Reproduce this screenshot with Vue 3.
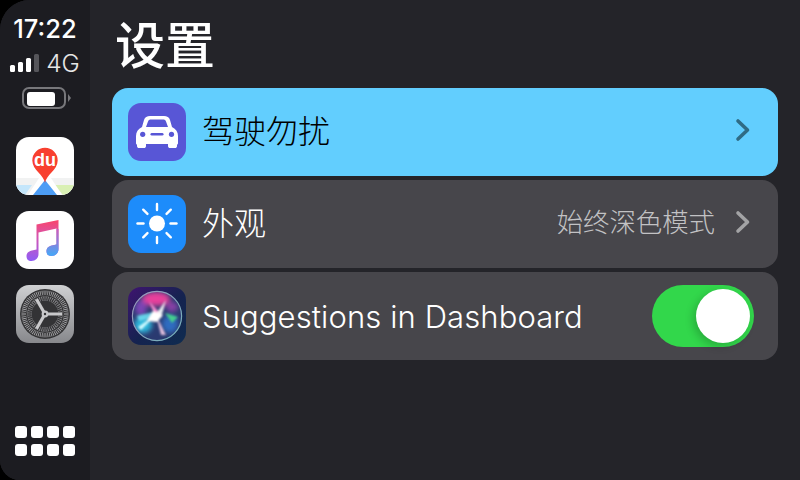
<script setup>
const rows = [
  { id: 'dnd', label: '驾驶勿扰', chevron: true, active: true },
  { id: 'look', label: '外观', value: '始终深色模式', chevron: true },
  { id: 'siri', label: 'Suggestions in Dashboard', latin: true, toggle: true },
]
const outerTicks = Array.from({ length: 72 }, (_, i) => i * 5)
const innerTicks = Array.from({ length: 48 }, (_, i) => i * 7.5)
const gridDots = Array.from({ length: 8 }, (_, i) => i)
const sunRays = [0, 45, 90, 135, 180, 225, 270, 315]
</script>

<template>
  <div class="screen">
    <aside class="sidebar">
      <div class="time">17:22</div>
      <div class="signal">
        <span class="bars">
          <i class="b1"></i><i class="b2"></i><i class="b3"></i><i class="b4"></i>
        </span>
        <span class="net">4G</span>
      </div>
      <div class="battery">
        <span class="cell"><span class="charge"></span></span>
        <span class="tip"></span>
      </div>

      <div class="apps">
        <svg class="app" viewBox="0 0 58 58">
          <defs>
            <clipPath id="appClip"><rect width="58" height="58" rx="13" /></clipPath>
          </defs>
          <g clip-path="url(#appClip)">
            <rect width="58" height="58" fill="#fff" />
            <rect y="41" width="58" height="17" fill="#f1f2f2" />
            <path d="M0 48 L16 48 L9 58 L0 58Z" fill="#c4e6fb" />
            <path d="M58 48 L39 48 L47 58 L58 58Z" fill="#d9f0b4" />
            <path d="M23 41 L35 41 L46 58 L12 58Z" fill="#fff" />
            <path d="M29 43 L17 58 L41 58Z" fill="#4d9df5" />
            <path d="M29 46 C28 38 16.3 33 16.3 23.5 A12.7 12.7 0 0 1 41.7 23.5 C41.7 33 30 38 29 46Z" fill="#f8402f" />
            <text x="29" y="29" class="du">du</text>
          </g>
        </svg>

        <svg class="app" viewBox="0 0 58 58">
          <defs>
            <linearGradient id="noteGrad" x1="0" y1="0" x2="0" y2="1">
              <stop offset="0" stop-color="#f9446a" />
              <stop offset="0.4" stop-color="#d655b0" />
              <stop offset="1" stop-color="#8f5cf5" />
            </linearGradient>
            <linearGradient id="noteBlue" x1="0" y1="0" x2="0" y2="1">
              <stop offset="0" stop-color="#c85cc0" />
              <stop offset="1" stop-color="#42aaf8" />
            </linearGradient>
          </defs>
          <rect width="58" height="58" rx="13" fill="#fff" />
          <path d="M20.5 13.5 L42.5 9 V38 C42.5 42 39.5 45 35.5 45 C32 45 30.5 43 30.5 40 C30.5 37 33 35 36 34.5 L40.5 33.5 V17.5 L22.5 21.5 V43 C22.5 47 19.5 50 15.5 50 C12 50 10.5 48 10.5 45 C10.5 42 13 40 16 39.5 L20.5 38.5Z" fill="url(#noteGrad)" />
          <path d="M40.5 18 H42.5 V38 C42.5 42 39.5 45 35.5 45 C32 45 30.5 43 30.5 40 C30.5 37 33 35 36 34.5 L40.5 33.5Z" fill="url(#noteBlue)" />
        </svg>

        <svg class="app" viewBox="0 0 58 58">
          <defs>
            <linearGradient id="gearBg" x1="0" y1="0" x2="0" y2="1">
              <stop offset="0" stop-color="#cfd0d2" />
              <stop offset="1" stop-color="#87888c" />
            </linearGradient>
          </defs>
          <rect width="58" height="58" rx="13" fill="url(#gearBg)" />
          <circle cx="29" cy="29" r="25" fill="#333335" />
          <circle cx="29" cy="29" r="23.6" fill="#b0b0b3" />
          <g stroke="#333335" stroke-width="1.1">
            <line v-for="t in outerTicks" :key="t" x1="29" y1="5" x2="29" y2="10" :transform="`rotate(${t} 29 29)`" />
          </g>
          <circle cx="29" cy="29" r="19" fill="#333335" />
          <circle cx="29" cy="29" r="17.6" fill="#a4a4a7" />
          <g stroke="#333335" stroke-width="1.4">
            <line v-for="t in innerTicks" :key="t" x1="29" y1="11.6" x2="29" y2="15.6" :transform="`rotate(${t} 29 29)`" />
          </g>
          <circle cx="29" cy="29" r="13.4" fill="#333335" />
          <g stroke="#c8c8ca" stroke-width="3.2">
            <line x1="29" y1="29" x2="46" y2="29" />
            <line x1="29" y1="29" x2="20.5" y2="14.3" />
            <line x1="29" y1="29" x2="20.5" y2="43.7" />
          </g>
          <circle cx="29" cy="29" r="3.4" fill="#c8c8ca" />
          <circle cx="29" cy="29" r="1.2" fill="#333335" />
        </svg>
      </div>

      <div class="grid-btn">
        <i v-for="d in gridDots" :key="d"></i>
      </div>
    </aside>

    <main class="main">
      <h1 class="title">设置</h1>
      <ul class="list">
        <li v-for="row in rows" :key="row.id" class="row" :class="{ active: row.active }">
          <svg v-if="row.id === 'dnd'" class="icon" viewBox="0 0 58 58">
            <rect width="58" height="58" rx="13" fill="#5856d6" />
            <path fill-rule="evenodd" fill="#fff" d="M14 24 L16 17 C17 14 19 13 22 13 H36 C39 13 41 14 42 17 L44 24 C48 26 50 29 50 33 V40 C50 41 49.5 41.5 49 41.5 V43 C49 44.5 48 45 47 45 H42 C41 45 40 44.5 40 43 V41 H18 V43 C18 44.5 17 45 16 45 H11 C10 45 9 44.5 9 43 V41.5 C8.5 41.5 8 41 8 40 V33 C8 29 10 26 14 24Z M18 24 H40 L38 18.5 C37.5 17 36.5 16.5 35 16.5 H23 C21.5 16.5 20.5 17 20 18.5Z" />
            <circle cx="14.7" cy="31.3" r="2.6" fill="#5856d6" />
            <circle cx="43.5" cy="31.3" r="2.6" fill="#5856d6" />
            <rect x="22.5" y="30" width="13" height="2.6" rx="1.3" fill="#5856d6" />
          </svg>

          <svg v-else-if="row.id === 'look'" class="icon" viewBox="0 0 58 58">
            <rect width="58" height="58" rx="13" fill="#1d8cfb" />
            <circle cx="29" cy="28.5" r="8" fill="#fff" />
            <line v-for="a in sunRays" :key="a" x1="29" y1="9" x2="29" y2="15" stroke="#fff" stroke-width="2.4" stroke-linecap="round" :transform="`rotate(${a} 29 28.5)`" />
          </svg>

          <svg v-else class="icon" viewBox="0 0 58 58">
            <defs>
              <linearGradient id="siriBg" x1="0" y1="0" x2="1" y2="1">
                <stop offset="0" stop-color="#3f1470" />
                <stop offset="0.55" stop-color="#14234f" />
                <stop offset="1" stop-color="#0f2c50" />
              </linearGradient>
              <linearGradient id="siriRing" x1="0" y1="0" x2="1" y2="1">
                <stop offset="0" stop-color="#a094bc" />
                <stop offset="1" stop-color="#6fb4ba" />
              </linearGradient>
              <clipPath id="siriClip"><circle cx="29" cy="29" r="24.5" /></clipPath>
              <filter id="siriBlur" x="-50%" y="-50%" width="200%" height="200%">
                <feGaussianBlur stdDeviation="2.4" />
              </filter>
              <filter id="siriSoft" x="-50%" y="-50%" width="200%" height="200%">
                <feGaussianBlur stdDeviation="1.1" />
              </filter>
            </defs>
            <rect width="58" height="58" rx="13" fill="url(#siriBg)" />
            <circle cx="29" cy="29" r="25" fill="#2a3a70" />
            <g clip-path="url(#siriClip)">
              <g filter="url(#siriBlur)">
                <ellipse cx="28" cy="12" rx="14" ry="7" fill="#e8409c" />
                <ellipse cx="13" cy="21" rx="6" ry="8" fill="#7a44b4" />
                <ellipse cx="15" cy="38" rx="9" ry="8" fill="#2fb8dc" />
                <ellipse cx="42" cy="37" rx="8" ry="9" fill="#2f6cc0" />
                <ellipse cx="44" cy="20" rx="6" ry="5" fill="#8a40a8" />
              </g>
              <g filter="url(#siriSoft)">
                <path d="M37 26 L50 30 L44 36Z" fill="#44cc8e" />
                <path d="M21 14 L32 26 L27 29Z" fill="#f28ccf" />
                <path d="M30 26 L13 43 L10 40Z" fill="#d2faff" />
                <path d="M25 25 L9 29 L11 34 L27 31Z" fill="#6ce2f2" opacity="0.85" />
                <path d="M28 27 L38 13 L33 31Z" fill="#fff" opacity="0.9" />
                <path d="M28 28 L38 48 L33 48Z" fill="#f4cce8" opacity="0.9" />
                <path d="M25 24 L35 28 L29 35 L19 34Z" fill="#fff" />
              </g>
            </g>
            <circle cx="29" cy="29" r="24.6" fill="none" stroke="url(#siriRing)" stroke-width="1.2" />
          </svg>

          <span class="label" :class="{ latin: row.latin }">{{ row.label }}</span>
          <span v-if="row.value" class="value">{{ row.value }}</span>
          <svg v-if="row.chevron" class="chevron" viewBox="0 0 16 24">
            <path d="M3 3 L12.5 12 L3 21" fill="none" stroke="currentColor" stroke-width="3.6" stroke-linecap="round" stroke-linejoin="round" />
          </svg>
          <span v-if="row.toggle" class="toggle"><span class="knob"></span></span>
        </li>
      </ul>
    </main>
  </div>
</template>

<style>
html,
body {
  margin: 0;
  background: #000;
}
</style>

<style scoped>
.screen {
  display: flex;
  width: 800px;
  height: 480px;
  overflow: hidden;
  border-radius: 30px 0 0 20px;
  background: #242429;
  font-family: Inter, "Noto Sans CJK SC", sans-serif;
  color: #fff;
}

.sidebar {
  width: 90px;
  flex: none;
  display: flex;
  flex-direction: column;
  align-items: center;
  background: #1c1c21;
  box-sizing: border-box;
  padding: 15px 0 24px;
}

.time {
  font-size: 25.5px;
  line-height: 28px;
  font-weight: 500;
}

.signal {
  display: flex;
  align-items: center;
  gap: 7px;
  height: 26px;
  margin-top: 7px;
}

.bars {
  display: flex;
  align-items: flex-end;
  gap: 3px;
  height: 18px;
}

.bars i {
  display: block;
  width: 5px;
  background: #fff;
  border-radius: 1.5px;
}

.b1 { height: 7px; }
.b2 { height: 10px; }
.b3 { height: 14px; }
.bars .b4 { height: 18px; background: #55555a; }

.net {
  font-size: 24.5px;
  font-weight: 300;
  color: #e6e6e6;
}

.battery {
  display: flex;
  align-items: center;
  gap: 2px;
  margin-top: 11px;
  margin-left: 2px;
}

.cell {
  display: block;
  box-sizing: border-box;
  width: 44px;
  height: 22px;
  padding: 3px;
  border: 2px solid #77777b;
  border-radius: 7px;
}

.charge {
  display: block;
  width: 28px;
  height: 14px;
  background: #fff;
  border-radius: 3px;
}

.tip {
  display: block;
  width: 0;
  height: 0;
  border-left: 3px solid #77777b;
  border-top: 4px solid transparent;
  border-bottom: 4px solid transparent;
}

.apps {
  display: flex;
  flex-direction: column;
  gap: 16px;
  margin-top: 28px;
}

.app {
  display: block;
  width: 58px;
  height: 58px;
}

.du {
  font-family: "Liberation Sans", sans-serif;
  font-size: 18px;
  font-weight: 700;
  fill: #fff;
  text-anchor: middle;
}

.grid-btn {
  display: grid;
  grid-template-columns: repeat(4, 12px);
  gap: 6px 4px;
  margin-top: auto;
}

.grid-btn i {
  display: block;
  height: 12px;
  background: #fff;
  border-radius: 3px;
}

.main {
  flex: 1;
  min-width: 0;
  padding: 0 22px;
}

.title {
  margin: 0 0 0 3px;
  height: 88px;
  box-sizing: border-box;
  padding-top: 12px;
  font-size: 50px;
  line-height: 68px;
  font-weight: 500;
}

.list {
  display: flex;
  flex-direction: column;
  gap: 4px;
  margin: 0;
  padding: 0;
  list-style: none;
}

.row {
  display: flex;
  align-items: center;
  height: 88px;
  padding: 0 24px 0 16px;
  background: #47464b;
  border-radius: 16px;
}

.row.active {
  background: #62cefe;
  color: #000;
}

.icon {
  width: 58px;
  height: 58px;
  flex: none;
}

.label {
  margin-left: 16px;
  flex: 1;
  font-size: 32px;
  line-height: 44px;
  font-weight: 300;
}

.label.latin {
  margin-top: 2px;
  font-size: 31px;
  letter-spacing: 0.1px;
}

.value {
  font-size: 26.4px;
  line-height: 44px;
  margin: 0 20px 4px 0;
  font-weight: 300;
  color: #c2c2c4;
}

.chevron {
  width: 16px;
  height: 24px;
  flex: none;
  margin: 0 3px 5px 0;
  color: #a3a3a5;
}

.row.active .chevron {
  color: #2f6b84;
}

.toggle {
  display: flex;
  align-items: center;
  justify-content: flex-end;
  width: 102px;
  height: 62px;
  box-sizing: border-box;
  padding-right: 4px;
  background: #32d74b;
  border-radius: 31px;
}

.knob {
  width: 54px;
  height: 54px;
  background: #fff;
  border-radius: 50%;
  box-shadow: -3px 3px 8px rgba(0, 0, 0, 0.2);
}
</style>
